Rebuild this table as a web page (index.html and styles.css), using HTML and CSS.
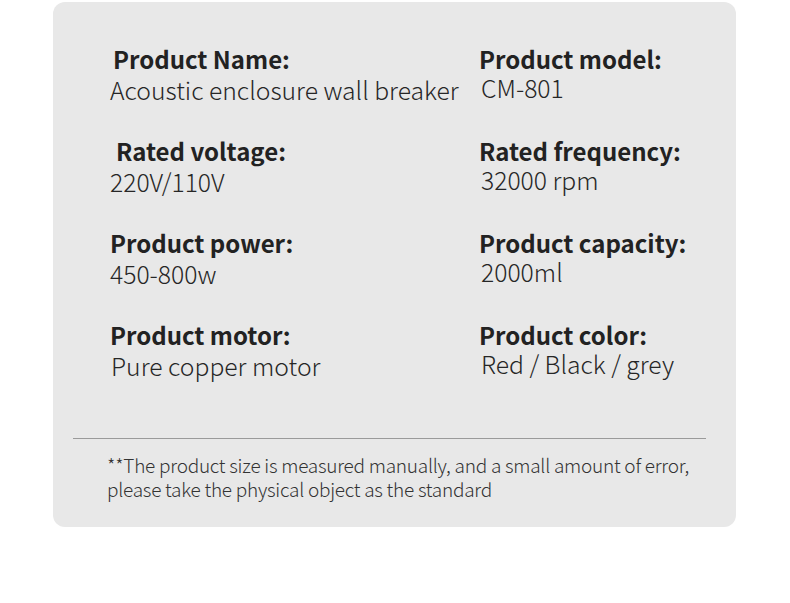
FILE: index.html
```html
<!DOCTYPE html>
<html>
<head>
<meta charset="utf-8">
<link rel="stylesheet" href="styles.css">
</head>
<body>
<div class="card">
  <div class="specs">
    <div class="item"><div class="label l1">Product Name:</div><div class="value">Acoustic enclosure wall breaker</div></div>
    <div class="item right"><div class="label">Product model:</div><div class="value">CM-801</div></div>
    <div class="item"><div class="label l2">Rated voltage:</div><div class="value">220V/110V</div></div>
    <div class="item right"><div class="label">Rated frequency:</div><div class="value">32000 rpm</div></div>
    <div class="item"><div class="label">Product power:</div><div class="value">450-800w</div></div>
    <div class="item right"><div class="label">Product capacity:</div><div class="value">2000ml</div></div>
    <div class="item"><div class="label l3">Product motor:</div><div class="value v1">Pure copper motor</div></div>
    <div class="item right"><div class="label">Product color:</div><div class="value">Red / Black / grey</div></div>
  </div>
  <div class="divider"></div>
  <p class="note">**The product size is measured manually, and a small amount of error,<br>please take the physical object as the standard</p>
</div>
</body>
</html>
```

FILE: styles.css
```css
html, body {
  margin: 0;
  padding: 0;
  background: #ffffff;
}
body {
  font-family: "Noto Sans CJK SC", "Source Sans Pro", "Noto Sans", sans-serif;
  color: #222;
}
.card {
  margin: 2px 0 0 53px;
  width: 683px;
  height: 525px;
  box-sizing: border-box;
  background: #e8e8e8;
  border-radius: 12px;
  padding: 42px 0 0 0;
}
.specs {
  display: grid;
  grid-template-columns: 370px 250px;
  row-gap: 32px;
  padding-left: 57px;
}
.label {
  font-size: 24px;
  font-weight: 700;
  line-height: 30px;
  color: #222;
  white-space: nowrap;
}
.l1 { padding-left: 3px; }
.l2 { padding-left: 6px; }
.value {
  font-size: 24.7px;
  font-weight: 300;
  line-height: 30px;
  color: #262626;
  white-space: nowrap;
}
.right .label {
  line-height: 26px;
  padding-top: 2px;
  margin-left: -1px;
}
.right .value {
  padding-left: 1px;
}
.v1 { padding-left: 1px; }
.divider {
  margin: 58px 0 0 20px;
  width: 633px;
  height: 1px;
  background: #9a9a9a;
}
.note {
  margin: 14px 0 0 54px;
  font-size: 19px;
  line-height: 24px;
  font-weight: 300;
  color: #333;
  letter-spacing: -0.25px;
}
```
